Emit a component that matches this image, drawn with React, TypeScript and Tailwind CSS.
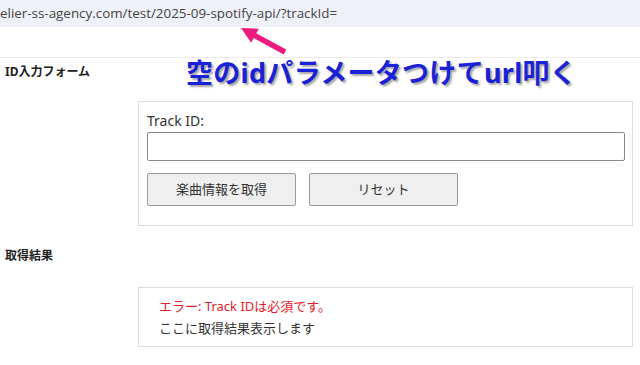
const jp = "font-['Noto_Sans','Noto_Sans_CJK_JP',sans-serif]";

function Arrow() {
  return (
    <svg
      className="absolute left-[236px] top-[24px]"
      width="54"
      height="32"
      viewBox="0 0 54 32"
      aria-hidden="true"
    >
      <line x1="17" y1="10.6" x2="49" y2="28" stroke="#ec1c7f" strokeWidth="5.5" />
      <polygon points="5,4 15.2,18.7 22.8,4.7" fill="#ec1c7f" />
    </svg>
  );
}

export default function App() {
  return (
    <div className={`relative h-[365px] w-[640px] overflow-hidden bg-white text-[#333] ${jp}`}>
      {/* address bar */}
      <div className="flex h-[27px] items-center bg-[#eef1f8] text-[13.4px] text-[#444] font-['Open_Sans','Noto_Sans',sans-serif]">
        elier-ss-agency.com/test/2025-09-spotify-api/?trackId=
      </div>
      <div className="h-[31px] border-b border-[#ececec]" />

      <main className="pl-[5px]">
        <h2 className="mt-[5px] text-[12px] font-bold leading-[18px] text-[#222]">ID入力フォーム</h2>

        <div className="ml-[133px] mt-[20px] w-[495px] border border-[#dcdcdc] pb-[19px] pl-[8px] pt-[9px]">
          <label className="block text-[14px] leading-[20px]">Track ID:</label>
          <input
            type="text"
            className="mt-[1px] block h-[29px] w-[478px] rounded-[2px] border border-[#8a8a8a] bg-white"
          />
          <div className="mt-[12px] flex gap-[13px]">
            <button className="h-[33px] w-[149px] rounded-[2px] border border-[#9a9a9a] bg-[#efefef] text-[13px]">
              楽曲情報を取得
            </button>
            <button className="h-[33px] w-[149px] rounded-[2px] border border-[#9a9a9a] bg-[#efefef] text-[13px]">
              リセット
            </button>
          </div>
        </div>

        <h2 className="mt-[21px] text-[12px] font-bold leading-[18px] text-[#222]">取得結果</h2>

        <div className="ml-[133px] mt-[22px] w-[495px] border border-[#dcdcdc] py-[7px] pl-[20px] text-[13px] leading-[22px]">
          <p className="text-[#e5202a]">エラー: Track IDは必須です。</p>
          <p>ここに取得結果表示します</p>
        </div>
      </main>

      {/* annotation */}
      <Arrow />
      <div className="absolute left-[186px] top-[57px] whitespace-nowrap text-[27px] font-bold leading-[32px] tracking-[0.3px] text-[#1a22d8] [text-shadow:2px_2px_2px_rgba(0,0,0,0.35)]">
        空のidパラメータつけてurl叩く
      </div>
    </div>
  );
}
